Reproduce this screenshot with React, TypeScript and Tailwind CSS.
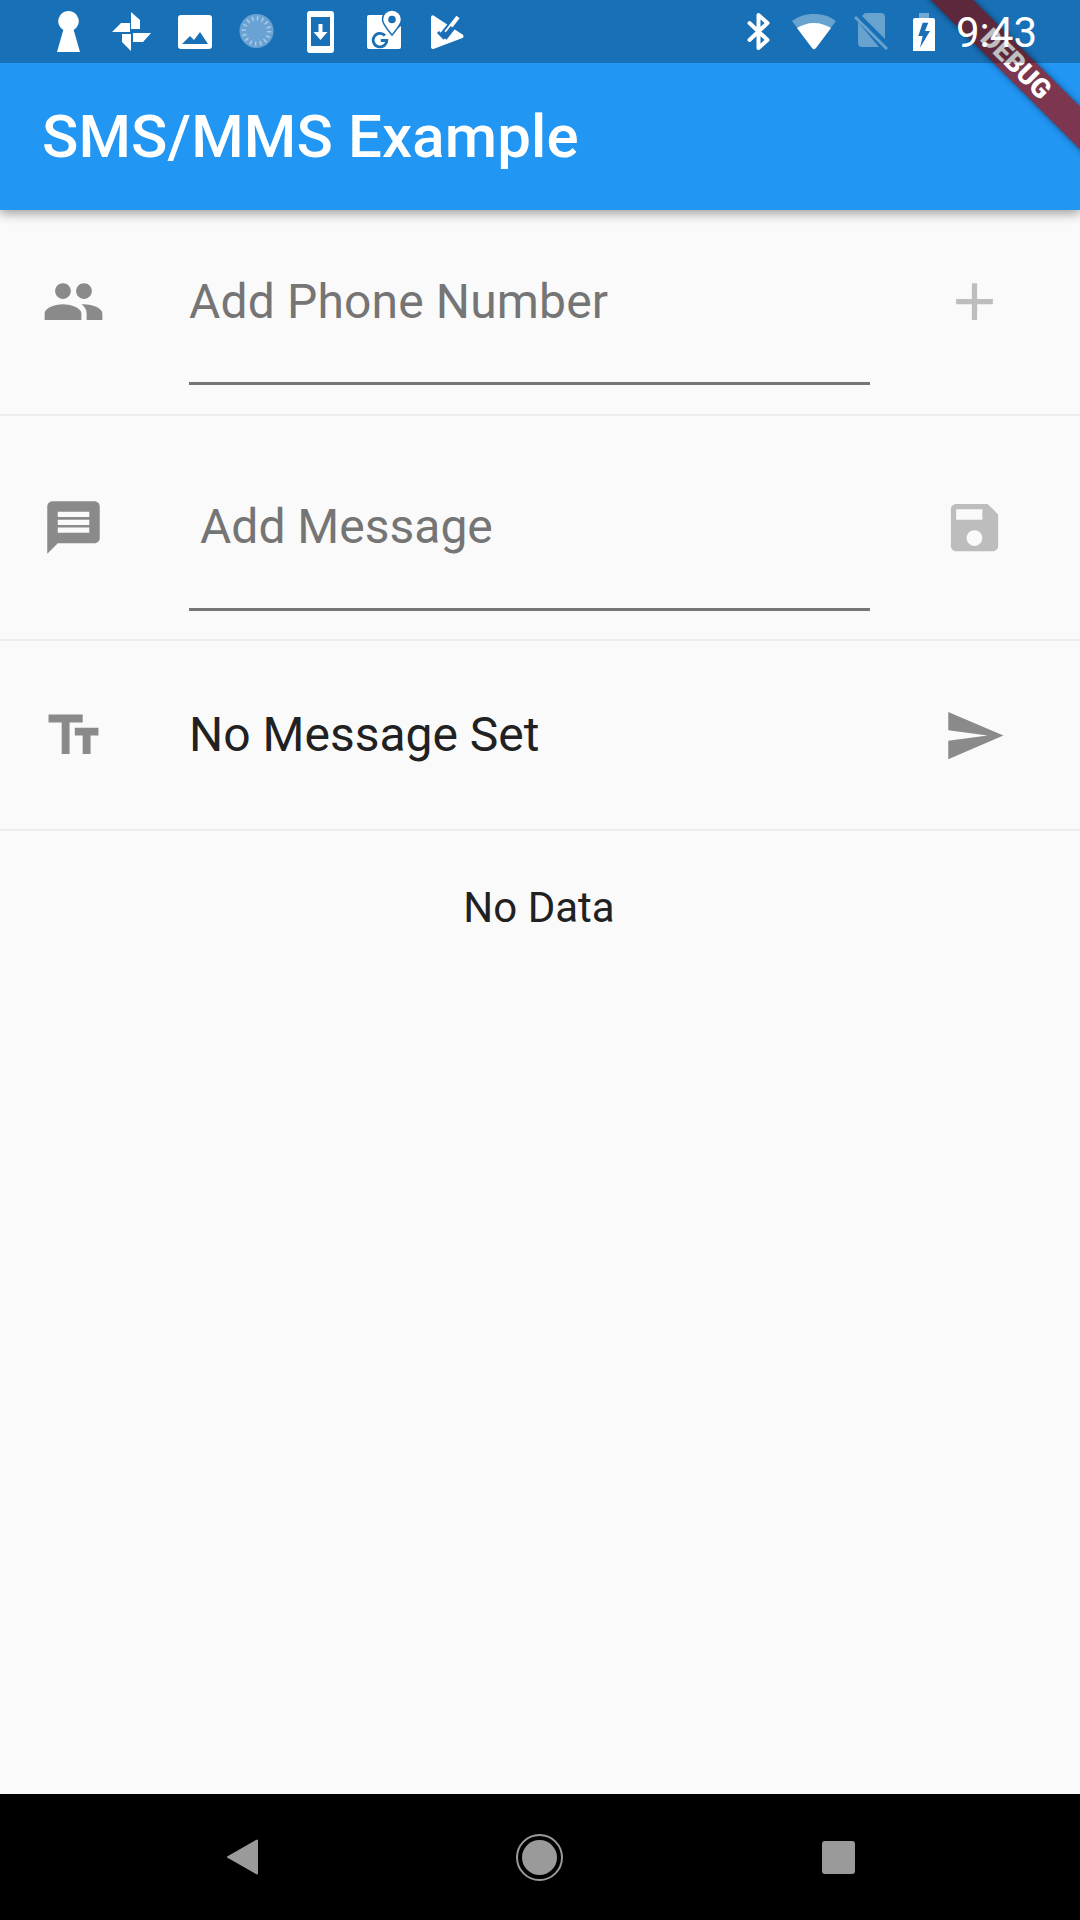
import React from "react";

const S = ({ className, children, vb = "0 0 24 24" }: { className: string; children: React.ReactNode; vb?: string }) => (
  <svg viewBox={vb} className={className} fill="currentColor" preserveAspectRatio="none">{children}</svg>
);

const BAR = "#1a6fb6";

function StatusBar() {
  return (
    <div className="relative z-30 h-[63px] bg-[rgba(0,0,0,0.25)] flex items-center text-white shrink-0">
      <S vb="0 0 23 41" className="w-[23px] h-[41px] ml-[57px] mt-[-1px]">
        <path d="M11.500 0a10.200 10.200 0 0 1 5.200 19L23 41H0L6.300 19A10.200 10.200 0 0 1 11.500 0z" />
      </S>
      <S vb="0 0 39 39" className="w-[39px] h-[39px] ml-[32px] mt-[-1px]">
        <path d="M19 0l9 8v9h-9zM0 20L9 11h9v9zM10 22h9v17l-9-9zM21 22v-1h18l-8 9h-10z" />
      </S>
      <S vb="0 0 34 34" className="w-[34px] h-[34px] ml-[27px]">
        <path fillRule="evenodd" d="M3 0h28a3 3 0 0 1 3 3v28a3 3 0 0 1-3 3H3a3 3 0 0 1-3-3V3a3 3 0 0 1 3-3zM4 29h26l-8-12-6 8-4-4z" />
      </S>
      <svg viewBox="0 0 38 38" className="w-[37px] h-[38px] ml-[27px]">
        <circle cx="18" cy="18" r="17.500" fill="#6aa3d3" />
        <path d="M31 3a18.500 18.500 0 0 1-23 33a18 18 0 0 0 23-33z" fill="#e4eef7" />
        <circle cx="18" cy="18" r="13" fill="none" stroke="#a8cbe6" strokeWidth="4.500" strokeDasharray="1.600 3.500" />
      </svg>
      <S vb="0 0 27 42" className="w-[27px] h-[42px] ml-[31px]">
        <path fillRule="evenodd" d="M3 0h21a3 3 0 0 1 3 3v36a3 3 0 0 1-3 3H3a3 3 0 0 1-3-3V3a3 3 0 0 1 3-3zM4 6v29h19V6zM11.500 13h4v8h5l-7 8-7-8h5z" />
      </S>
      <svg viewBox="0 0 35 39" className="w-[35px] h-[39px] ml-[33px] mt-[-4px]">
        <path d="M2 5h18l10 14 4-3v21a2 2 0 0 1-2 2H2a2 2 0 0 1-2-2V7a2 2 0 0 1 2-2z" fill="#fff" />
        <path d="M25 0a9.500 9.500 0 0 1 9.500 9.500c0 5-6 11-9.500 15.500-3.500-4.500-9.500-10.500-9.500-15.500A9.500 9.500 0 0 1 25 0z" fill="#fff" stroke={BAR} strokeWidth="1.500" />
        <circle cx="25" cy="9.500" r="3.800" fill={BAR} />
        <path d="M18 25.500a6.800 6.800 0 1 0 1.800 5h-6" fill="none" stroke={BAR} strokeWidth="2.800" />
      </svg>
      <svg viewBox="0 0 33 34" className="w-[33px] h-[34px] ml-[29px]">
        <path d="M2.500.500L31.500 19.500a2 2 0 0 1 0 3.500L3 33.700a2 2 0 0 1-3-2V2a2 2 0 0 1 2.500-1.500z" fill="#fff" />
        <path d="M12 22L27 3" fill="none" stroke={BAR} strokeWidth="9" />
        <path d="M15 17.500L27 2" fill="none" stroke="#fff" strokeWidth="4" />
        <path d="M7 17l5.500 5.500L21 12" fill="none" stroke={BAR} strokeWidth="3" />
      </svg>

      <S vb="0 0 23 37" className="w-[23px] h-[37px] ml-[283px]">
        <path fill="none" stroke="currentColor" strokeWidth="4" strokeLinecap="round" strokeLinejoin="round" d="M2.500 10l18 17-9 8V2l9 8-18 17" />
      </S>
      <svg viewBox="0 0 44 36" className="w-[44px] h-[36px] ml-[22px]">
        <path d="M22 0C13 0 6 2.500 0 7l22 29L44 7C38 2.500 31 0 22 0z" fill="#fff" fillOpacity=".35" />
        <path d="M22 9c-6.500 0-12 2-17 5l15 20a2.500 2.500 0 0 0 4 0l15-20c-5-3-10.500-5-17-5z" fill="#fff" />
      </svg>
      <svg viewBox="0 0 34 37" className="w-[34px] h-[37px] ml-[18px]">
        <path d="M11 0H27a4 4 0 0 1 4 4V26L8 3zM4 9V30a4 4 0 0 0 4 4H25z" fill="#fff" fillOpacity=".35" />
        <path d="M1 4L33 36" stroke="#fff" strokeOpacity=".35" strokeWidth="3" />
      </svg>
      <svg viewBox="0 0 22 38" className="w-[22px] h-[38px] ml-[25px]">
        <path d="M6 0h10v5H6z" fill="#fff" fillOpacity=".4" />
        <path d="M2 5H20a2 2 0 0 1 2 2V38H0V7a2 2 0 0 1 2-2z" fill="#fff" />
        <path d="M9.700 9.700L5.300 23H9.700L7 34.700 17 18H12L15.300 9.700z" fill={BAR} />
      </svg>
      <span className="ml-[21px] text-[42px] leading-none font-['Roboto',sans-serif] whitespace-nowrap mt-[3px]">9:43</span>
    </div>
  );
}

function Icon({ d, className }: { d: string; className: string }) {
  return (
    <svg viewBox="0 0 24 24" className={`w-[63px] h-[63px] shrink-0 ${className}`} fill="currentColor">
      <path d={d} />
    </svg>
  );
}

const PEOPLE = "M16 11c1.660 0 2.990-1.340 2.990-3S17.660 5 16 5c-1.660 0-3 1.340-3 3s1.340 3 3 3zm-8 0c1.660 0 2.990-1.340 2.990-3S9.660 5 8 5C6.340 5 5 6.340 5 8s1.340 3 3 3zm0 2c-2.330 0-7 1.170-7 3.500V19h14v-2.500c0-2.330-4.670-3.500-7-3.500zm8 0c-.290 0-.620.020-.970.050 1.160.840 1.970 1.970 1.970 3.450V19h6v-2.500c0-2.330-4.670-3.500-7-3.500z";
const MESSAGE = "M20 2H4c-1.100 0-1.990.900-1.990 2L2 22l4-4h14c1.100 0 2-.900 2-2V4c0-1.100-.900-2-2-2zm-2 12H6v-2h12v2zm0-3H6V9h12v2zm0-3H6V6h12v2z";
const TEXT = "M2.500 4v3h5v12h3V7h5V4h-13zm19 5h-9v3h3v7h3v-7h3V9z";
const ADD = "M19 13h-6v6h-2v-6H5v-2h6V5h2v6h6v2z";
const SAVE = "M17 3H5c-1.110 0-2 .900-2 2v14c0 1.100.890 2 2 2h14c1.100 0 2-.900 2-2V7l-4-4zm-5 16c-1.660 0-3-1.340-3-3s1.340-3 3-3 3 1.340 3 3-1.340 3-3 3zm3-10H5V5h10v4z";
const SEND = "M2.010 21L23 12 2.010 3 2 10l15 2-15 2z";

export default function App() {
  return (
    <div className="relative w-[1080px] h-[1920px] overflow-hidden bg-[#fafafa] flex flex-col font-['Roboto',sans-serif]">
      <div className="relative bg-[#2196f3] shrink-0 shadow-[0_4px_10px_rgba(0,0,0,0.35)]">
        <StatusBar />
        <div className="h-[147px] flex items-center pl-[42px]">
          <span className="text-[60px] font-medium text-white leading-none tracking-[0.15px]">SMS/MMS Example</span>
        </div>
      </div>

      <div className="h-[206px] shrink-0 border-b-[2px] border-[#ececec] flex pl-[42px] pt-[60px]">
        <Icon d={PEOPLE} className="text-[#8a8a8a]" />
        <div className="ml-[84px] w-[681px] h-[115px] border-b-[3px] border-[#757575]">
          <div className="text-[48px] leading-[63px] text-[#757575] tracking-[0.15px]">Add Phone Number</div>
        </div>
        <Icon d={ADD} className="ml-[73px] text-[#bdbdbd]" />
      </div>

      <div className="h-[225px] shrink-0 border-b-[2px] border-[#ececec] flex pl-[42px] pt-[80px]">
        <Icon d={MESSAGE} className="text-[#8a8a8a]" />
        <div className="ml-[84px] w-[681px] h-[115px] border-b-[3px] border-[#757575]">
          <div className="text-[48px] leading-[61px] text-[#757575] pl-[11px]">Add Message</div>
        </div>
        <Icon d={SAVE} className="ml-[73px] text-[#bdbdbd]" />
      </div>

      <div className="h-[190px] shrink-0 border-b-[2px] border-[#ececec] flex items-center pl-[42px]">
        <Icon d={TEXT} className="text-[#8a8a8a]" />
        <div className="ml-[84px] w-[681px] pb-[2px] text-[48px] leading-[63px] text-[#212121]">No Message Set</div>
        <Icon d={SEND} className="ml-[73px] text-[#8a8a8a]" />
      </div>

      <div className="pt-[52px] pr-[2px] text-center text-[42px] leading-[50px] text-[#212121]">No Data</div>

      <div className="mt-auto h-[126px] bg-black flex items-center justify-center shrink-0">
        <svg viewBox="0 0 32 36" className="w-[32px] h-[36px]">
          <path d="M31 1.500v33L2 18z" fill="#9a9a9a" stroke="#9a9a9a" strokeWidth="2" strokeLinejoin="round" />
        </svg>
        <div className="ml-[258px] w-[47px] h-[47px] rounded-full border-[2.500px] border-[#9a9a9a] flex items-center justify-center">
          <div className="w-[35px] h-[35px] rounded-full bg-[#9a9a9a]" />
        </div>
        <div className="ml-[259px] w-[33px] h-[33px] rounded-[3px] bg-[#9a9a9a]" />
      </div>

      <div className="absolute top-[49px] left-[885px] w-[262px] h-[30px] rotate-45 bg-[#7c3650] shadow-[0_0_6px_rgba(0,0,0,0.5)] flex items-center justify-center text-white text-[27px] font-black leading-none z-20">
        DEBUG
      </div>
    </div>
  );
}
